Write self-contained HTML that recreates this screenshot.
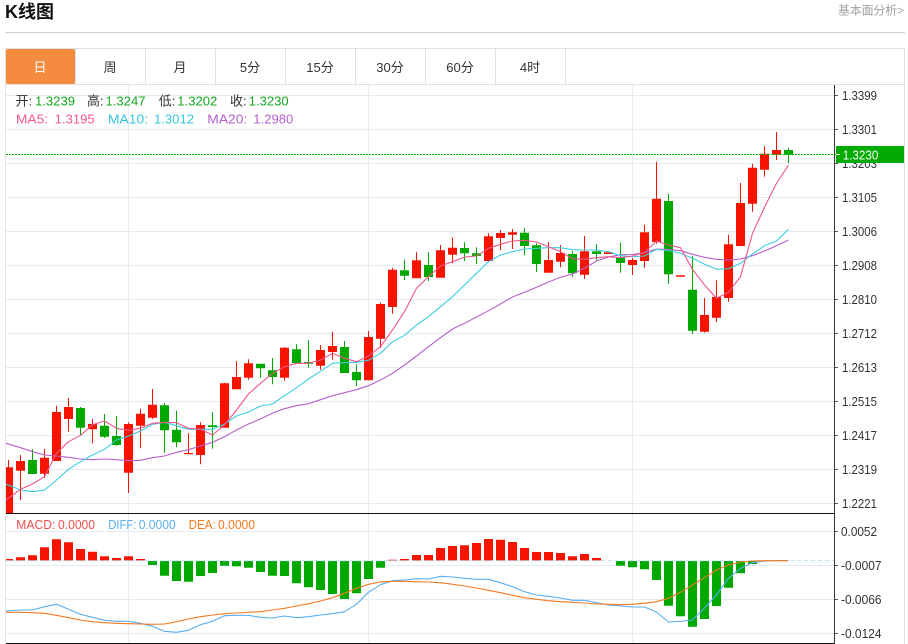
<!DOCTYPE html>
<html lang="zh"><head><meta charset="utf-8"><title>K线图</title>
<style>
html,body{margin:0;padding:0;background:#fff;width:908px;height:644px;overflow:hidden}
svg{display:block}
text{font-family:"Liberation Sans","Noto Sans CJK SC",sans-serif}
.ax{font-size:13px;fill:#333}
.tab{font-size:13px;fill:#333;text-anchor:middle}
</style></head><body>
<svg width="908" height="644" viewBox="0 0 908 644" xmlns="http://www.w3.org/2000/svg">
<rect width="908" height="644" fill="#fff"/>
<text x="5" y="18" font-size="18" font-weight="700" fill="#111">K线图</text>
<text x="838" y="14.5" font-size="12" fill="#a0a0a0" textLength="66">基本面分析&gt;</text>
<rect x="5" y="32" width="900" height="1" fill="#cfcfcf"/>
<!-- frame -->
<path fill="#e0e0e0" d="M5 48h900v1H5zM5 84h900v1H5zM5 48h1v596H5zM904 48h1v596h-1zM75 49h1v35h-1zM145 49h1v35h-1zM215 49h1v35h-1zM285 49h1v35h-1zM355 49h1v35h-1zM425 49h1v35h-1zM495 49h1v35h-1zM565 49h1v35h-1z"/>
<rect x="6" y="49" width="69" height="35" rx="2" fill="#f48b3f"/>
<text class="tab" x="40" y="72" style="fill:#fff">日</text>
<text class="tab" x="110" y="72">周</text>
<text class="tab" x="180" y="72">月</text>
<text class="tab" x="250" y="72">5分</text>
<text class="tab" x="320" y="72">15分</text>
<text class="tab" x="390" y="72">30分</text>
<text class="tab" x="460" y="72">60分</text>
<text class="tab" x="530" y="72">4时</text>
<!-- grid -->
<path fill="#e3ebf3" d="M6 95h828v1H6zM6 129h828v1H6zM6 163h828v1H6zM6 197h828v1H6zM6 231h828v1H6zM6 265h828v1H6zM6 299h828v1H6zM6 333h828v1H6zM6 367h828v1H6zM6 401h828v1H6zM6 435h828v1H6zM6 469h828v1H6zM6 503h828v1H6zM6 531h828v1H6zM6 565h828v1H6zM6 599h828v1H6zM6 633h828v1H6zM128 85h1v559h-1zM368 85h1v559h-1zM632 85h1v559h-1z"/>
<!-- candles red -->
<path fill="#f51400" d="M6 467.3H13V513H6zM8 460h1v8h-1zM16 461h9V470.7h-9zM20 455h1V500h-1zM40 457.7h9V473.7h-9zM44 449h1V478h-1zM52 412h9V461h-9zM56 405.7h1V461h-1zM64 407h9V419h-9zM68 398h1V431.7h-1zM88 424h9V429.3h-9zM92 419h1V443.3h-1zM124 424h9V472.7h-9zM128 422.3h1V493h-1zM136 413.7h9V425.7h-9zM140 408.7h1V448.3h-1zM148 404.7h9V417.7h-9zM152 389h1V419h-1zM184 453h9V454.3h-9zM188 433.3h1V454h-1zM196 425h9V455h-9zM200 422.3h1V464.3h-1zM220 383.3h9V427.7h-9zM224 382.7h1V427.7h-1zM232 377h9V389.3h-9zM236 361.3h1V389.3h-1zM244 363.3h9V377.7h-9zM248 359.3h1V379.7h-1zM280 347.7h9V377.7h-9zM284 347h1V380.7h-1zM316 350h9V365.7h-9zM320 345h1V369.7h-1zM328 346h9V352h-9zM332 332h1V359.7h-1zM364 337h9V380.3h-9zM368 331h1V380.3h-1zM376 304h9V338.7h-9zM380 302.7h1V348h-1zM388 269.7h9V307h-9zM392 267.7h1V313.7h-1zM412 260.3h9V278.3h-9zM416 252.3h1V278.3h-1zM436 250.3h9V277.7h-9zM440 245h1V277.7h-1zM448 247.7h9V254.7h-9zM452 237.3h1V263.3h-1zM484 236.3h9V261h-9zM488 233.3h1V262.3h-1zM496 233h9V238h-9zM500 230h1V250h-1zM508 232.3h9V234.7h-9zM512 229h1V249h-1zM544 260h9V272.7h-9zM548 242.3h1V272.7h-1zM556 253h9V261.7h-9zM560 245h1V267.3h-1zM580 251.3h9V274.7h-9zM584 236h1V279h-1zM604 252.3h9V254h-9zM628 260h9V265h-9zM632 258h1V275h-1zM640 232.3h9V261h-9zM644 224.7h1V267.7h-1zM652 198.7h9V242h-9zM656 161.7h1V243.7h-1zM676 275.3h9V276.7h-9zM700 315h9V331.7h-9zM704 298h1V332.7h-1zM712 297h9V317.7h-9zM716 280.3h1V322h-1zM724 244.3h9V298h-9zM728 234.7h1V301.7h-1zM736 203h9V246h-9zM740 183h1V246h-1zM748 167.7h9V203.7h-9zM752 163.7h1V211.7h-1zM760 153.7h9V169.7h-9zM764 146h1V176.7h-1zM772 150h9V154.7h-9zM776 132h1V160h-1z"/>
<!-- candles green -->
<path fill="#00a800" d="M28 460h9V474h-9zM32 449.3h1V474h-1zM76 408h9V427.7h-9zM80 407h1V435.7h-1zM100 425.7h9V436.7h-9zM104 414h1V438h-1zM112 436h9V445h-9zM116 416h1V445.7h-1zM160 405.3h9V430.3h-9zM164 403h1V452.7h-1zM172 429.7h9V442.3h-9zM176 410.7h1V447.3h-1zM208 425.3h9V427h-9zM212 412h1V448.7h-1zM256 363.7h9V368.3h-9zM260 363.7h1V377.7h-1zM268 370.3h9V377h-9zM272 358h1V384.3h-1zM292 349.3h9V363h-9zM296 344.3h1V363.7h-1zM304 362h9V363.7h-9zM308 340h1V367.7h-1zM340 347h9V373h-9zM344 341h1V373h-1zM352 372h9V380.3h-9zM356 364h1V386h-1zM400 270.3h9V275.7h-9zM404 259.7h1V280h-1zM424 265h9V277h-9zM428 252h1V281.3h-1zM460 248h9V253.3h-9zM464 242.3h1V261h-1zM472 253.3h9V256h-9zM476 247.3h1V264h-1zM520 232.7h9V246h-9zM524 228h1V255.3h-1zM532 245.3h9V264h-9zM536 243.3h1V272h-1zM568 254h9V273.3h-9zM572 251h1V276.7h-1zM592 251.3h9V254h-9zM596 244h1V260.3h-1zM616 257.7h9V263h-9zM620 242.7h1V272.7h-1zM664 201h9V274.3h-9zM668 194h1V284h-1zM688 289.7h9V330.7h-9zM692 256h1V334.3h-1zM784 150h9V154.7h-9zM788 147.7h1V163h-1z"/>
<!-- MA lines -->
<g fill="none" stroke-width="1.1" stroke-linejoin="round">
<polyline stroke="#b65fcc" points="6,443.3 20.5,447.7 32.5,451.7 44.5,455 56.5,456 68.5,457.3 80.5,459 92.5,459.7 104.5,459 116.5,459.7 128.5,460.7 140.5,460.3 152.5,457.7 164.5,456 176.5,452.3 188.5,449.7 200.5,446 212.5,442.3 224.5,436.7 236.5,430 248.5,424 260.5,419 272.5,413 284.5,408.7 296.5,405.7 308.5,403.7 320.5,399.7 332.5,395.7 344.5,392.7 356.5,389.7 368.5,385.7 380.5,380 392.5,373.3 404.5,365 416.5,356 428.5,346.7 440.5,337.7 452.5,329 464.5,323.3 476.5,317 488.5,310.7 500.5,304 512.5,297 524.5,292.3 536.5,287.3 548.5,282 560.5,277.3 572.5,274 584.5,268.3 596.5,261 608.5,257 620.5,254.7 632.5,254.5 644.5,252.7 656.5,249.2 668.5,249.3 680.5,250.7 692.5,254.3 704.5,257.3 716.5,259.3 728.5,260 740.5,259 752.5,255.7 764.5,251 776.5,245.7 788.5,240"/>
<polyline stroke="#3ecde0" points="6,484 20.5,490 32.5,491.7 44.5,490 56.5,480 68.5,469.3 80.5,461.7 92.5,455 104.5,449.3 116.5,440 128.5,436 140.5,431 152.5,424.3 164.5,422.3 176.5,425.7 188.5,429.3 200.5,429.3 212.5,429.3 224.5,424 236.5,416 248.5,412 260.5,406 272.5,404 284.5,395.7 296.5,387.7 308.5,379 320.5,371.3 332.5,363.3 344.5,362.7 356.5,362.3 368.5,360.3 380.5,353.3 392.5,341.7 404.5,335.3 416.5,325 428.5,316.7 440.5,306.7 452.5,296.7 464.5,285 476.5,273.3 488.5,261.7 500.5,255 512.5,251.7 524.5,249 536.5,248.3 548.5,247.7 560.5,247.7 572.5,249.7 584.5,250 596.5,250 608.5,251.7 620.5,255.7 632.5,256.7 644.5,256 656.5,249.3 668.5,250.5 680.5,253.3 692.5,258.3 704.5,264.3 716.5,269.3 728.5,268.7 740.5,263.3 752.5,254 764.5,245.7 776.5,241 788.5,229.3"/>
<polyline stroke="#f0558c" points="6,500 20.5,489.3 32.5,484 44.5,476.7 56.5,453.3 68.5,441.7 80.5,435.3 92.5,424.7 104.5,421 116.5,428.3 128.5,430.3 140.5,428.3 152.5,423.3 164.5,422.3 176.5,422.7 188.5,428.3 200.5,429.3 212.5,435 224.5,425 236.5,410 248.5,394 260.5,383.3 272.5,373.3 284.5,366.7 296.5,363.3 308.5,363.3 320.5,360 332.5,353.3 344.5,358.3 356.5,361.7 368.5,356 380.5,346.7 392.5,330 404.5,311.7 416.5,288.3 428.5,276.7 440.5,266 452.5,261.7 464.5,257 476.5,256 488.5,248.3 500.5,244.3 512.5,241 524.5,240.3 536.5,242 548.5,246.7 560.5,251.7 572.5,258.7 584.5,259.3 596.5,257.7 608.5,256.7 620.5,257.7 632.5,256 644.5,252.5 656.5,241 668.5,245 680.5,247.7 692.5,269.3 704.5,285 716.5,298.3 728.5,292.3 740.5,276.7 752.5,233.3 764.5,207.3 776.5,183.3 788.5,165"/>
</g>
<!-- price line -->
<line x1="6" y1="154.5" x2="836" y2="154.5" stroke="#00b400" stroke-width="1" stroke-dasharray="2 1"/>
<!-- MACD bars -->
<path fill="#f51400" d="M6 559h7V560.5H6zM16 557.3h9V560.5h-9zM28 555.3h9V560.5h-9zM40 547.3h9V560.5h-9zM52 539.3h9V560.5h-9zM64 542.3h9V560.5h-9zM76 549h9V560.5h-9zM88 551.7h9V560.5h-9zM100 556.3h9V560.5h-9zM112 558h9V560.5h-9zM124 556.3h9V560.5h-9zM136 559h9V560.5h-9zM388 559.7h9V560.5h-9zM400 559h9V560.5h-9zM412 555h9V560.5h-9zM424 555h9V560.5h-9zM436 548h9V560.5h-9zM448 546h9V560.5h-9zM460 545.3h9V560.5h-9zM472 543h9V560.5h-9zM484 539h9V560.5h-9zM496 539.7h9V560.5h-9zM508 542h9V560.5h-9zM520 548h9V560.5h-9zM532 552h9V560.5h-9zM544 552h9V560.5h-9zM556 553h9V560.5h-9zM568 556.3h9V560.5h-9zM580 554h9V560.5h-9zM592 558h9V560.5h-9z"/>
<path fill="#00a800" d="M148 561h9V565h-9zM160 561h9V575.7h-9zM172 561h9V581h-9zM184 561h9V581.7h-9zM196 561h9V576h-9zM208 561h9V573h-9zM220 561h9V565.7h-9zM232 561h9V566.3h-9zM244 561h9V567.7h-9zM256 561h9V572h-9zM268 561h9V575.7h-9zM280 561h9V576h-9zM292 561h9V583.3h-9zM304 561h9V587.3h-9zM316 561h9V590h-9zM328 561h9V594h-9zM340 561h9V599h-9zM352 561h9V593.3h-9zM364 561h9V579h-9zM376 561h9V567.7h-9zM616 561h9V565.7h-9zM628 561h9V567.3h-9zM640 561h9V569.3h-9zM652 561h9V580h-9zM664 561h9V605.7h-9zM676 561h9V616.3h-9zM688 561h9V626.7h-9zM700 561h9V619h-9zM712 561h9V606h-9zM724 561h9V587.7h-9zM736 561h9V573.3h-9zM748 561h9V564h-9z"/>
<line x1="6" y1="560.7" x2="834" y2="560.7" stroke="#b9e4f0" stroke-width="1" stroke-dasharray="4 3"/>
<g fill="none" stroke-width="1.1" stroke-linejoin="round">
<polyline stroke="#5aaef0" points="6,611 20.5,610 32.5,610 44.5,606.7 56.5,604.3 68.5,609.3 80.5,614.3 92.5,617.3 104.5,620.3 116.5,621.3 128.5,621.3 140.5,623.3 152.5,626.3 164.5,631.3 176.5,632.3 188.5,630.3 200.5,624.7 212.5,621.3 224.5,615.7 236.5,615.3 248.5,615.3 260.5,617.3 272.5,618 284.5,616 296.5,617.7 308.5,616.7 320.5,615 332.5,613.7 344.5,611.7 356.5,604.3 368.5,592.3 380.5,584.7 392.5,580.7 404.5,580 416.5,578.7 428.5,579 440.5,576.3 452.5,577 464.5,578.3 476.5,579.3 488.5,579.3 500.5,582.7 512.5,586.7 524.5,591.7 536.5,595 548.5,596.3 560.5,598 572.5,600.3 584.5,600.3 596.5,602.7 608.5,605 620.5,606 632.5,607 644.5,607 656.5,612 668.5,622 680.5,621.3 692.5,620 704.5,608 716.5,595 728.5,578.3 740.5,568.3 752.5,562.7 764.5,561 776.5,560.7 788.5,560.7"/>
<polyline stroke="#f47a20" points="6,612.3 20.5,612.3 32.5,612.7 44.5,613.3 56.5,615.3 68.5,617.7 80.5,620 92.5,621.7 104.5,622.7 116.5,623.3 128.5,623.7 140.5,624 152.5,624.3 164.5,624 176.5,621.7 188.5,619 200.5,616.7 212.5,615 224.5,613.7 236.5,613 248.5,612.3 260.5,611.7 272.5,610 284.5,608.3 296.5,606 308.5,603.7 320.5,601 332.5,597.7 344.5,593.3 356.5,588.3 368.5,584.3 380.5,582 392.5,581.3 404.5,581.3 416.5,581.7 428.5,582 440.5,582.7 452.5,584.3 464.5,586 476.5,588 488.5,590.3 500.5,592.7 512.5,595.3 524.5,597.7 536.5,599.3 548.5,600.7 560.5,601.7 572.5,602.3 584.5,603 596.5,604 608.5,604.3 620.5,604.7 632.5,604.3 644.5,603.3 656.5,601.7 668.5,598.3 680.5,592.3 692.5,585 704.5,577.7 716.5,570 728.5,565 740.5,562 752.5,561 764.5,560.7 776.5,560.7 788.5,560.7"/>
</g>
<!-- frame lines -->
<rect x="6" y="513" width="829" height="1" fill="#111"/>
<rect x="6" y="643" width="829" height="1" fill="#111"/>
<rect x="834" y="85" width="1" height="559" fill="#333"/>
<!-- ticks -->
<path fill="#555" d="M835 95h3v1h-3zM835 129h3v1h-3zM835 163h3v1h-3zM835 197h3v1h-3zM835 231h3v1h-3zM835 265h3v1h-3zM835 299h3v1h-3zM835 333h3v1h-3zM835 367h3v1h-3zM835 401h3v1h-3zM835 435h3v1h-3zM835 469h3v1h-3zM835 503h3v1h-3zM835 531h3v1h-3zM835 565h3v1h-3zM835 599h3v1h-3zM835 633h3v1h-3z"/>
<!-- axis labels -->
<g>
<text class="ax" x="842" y="99.8" textLength="35" lengthAdjust="spacingAndGlyphs">1.3399</text>
<text class="ax" x="842" y="133.8" textLength="35" lengthAdjust="spacingAndGlyphs">1.3301</text>
<text class="ax" x="842" y="167.8" textLength="35" lengthAdjust="spacingAndGlyphs">1.3203</text>
<text class="ax" x="842" y="201.8" textLength="35" lengthAdjust="spacingAndGlyphs">1.3105</text>
<text class="ax" x="842" y="235.8" textLength="35" lengthAdjust="spacingAndGlyphs">1.3006</text>
<text class="ax" x="842" y="269.8" textLength="35" lengthAdjust="spacingAndGlyphs">1.2908</text>
<text class="ax" x="842" y="303.8" textLength="35" lengthAdjust="spacingAndGlyphs">1.2810</text>
<text class="ax" x="842" y="337.8" textLength="35" lengthAdjust="spacingAndGlyphs">1.2712</text>
<text class="ax" x="842" y="371.8" textLength="35" lengthAdjust="spacingAndGlyphs">1.2613</text>
<text class="ax" x="842" y="405.8" textLength="35" lengthAdjust="spacingAndGlyphs">1.2515</text>
<text class="ax" x="842" y="439.8" textLength="35" lengthAdjust="spacingAndGlyphs">1.2417</text>
<text class="ax" x="842" y="473.8" textLength="35" lengthAdjust="spacingAndGlyphs">1.2319</text>
<text class="ax" x="842" y="507.8" textLength="35" lengthAdjust="spacingAndGlyphs">1.2221</text>
<text class="ax" x="841" y="535.8" textLength="36" lengthAdjust="spacingAndGlyphs">0.0052</text>
<text class="ax" x="841" y="569.8" textLength="40.5" lengthAdjust="spacingAndGlyphs">-0.0007</text>
<text class="ax" x="841" y="603.8" textLength="40.5" lengthAdjust="spacingAndGlyphs">-0.0066</text>
<text class="ax" x="841" y="637.8" textLength="40.5" lengthAdjust="spacingAndGlyphs">-0.0124</text>
</g>
<!-- last price -->
<rect x="836" y="146" width="68" height="17" fill="#00aa00"/>
<rect x="836" y="154" width="4" height="1" fill="#fff"/>
<text x="842.7" y="159.3" font-size="13" fill="#fff" textLength="35.6" lengthAdjust="spacingAndGlyphs">1.3230</text>
<!-- legend -->
<g font-size="13">
<text x="15.5" y="105.5" fill="#333">开:</text>
<text x="35" y="105.5" fill="#14a81e" textLength="40" lengthAdjust="spacingAndGlyphs">1.3239</text>
<text x="87" y="105.5" fill="#333">高:</text>
<text x="105.5" y="105.5" fill="#14a81e" textLength="40" lengthAdjust="spacingAndGlyphs">1.3247</text>
<text x="158.7" y="105.5" fill="#333">低:</text>
<text x="177.3" y="105.5" fill="#14a81e" textLength="40" lengthAdjust="spacingAndGlyphs">1.3202</text>
<text x="230" y="105.5" fill="#333">收:</text>
<text x="248.7" y="105.5" fill="#14a81e" textLength="40" lengthAdjust="spacingAndGlyphs">1.3230</text>
<text x="16" y="123.5" fill="#f4588c" textLength="32" lengthAdjust="spacingAndGlyphs">MA5:</text>
<text x="54.7" y="123.5" fill="#f4588c" textLength="40" lengthAdjust="spacingAndGlyphs">1.3195</text>
<text x="108" y="123.5" fill="#36c5dd" textLength="40" lengthAdjust="spacingAndGlyphs">MA10:</text>
<text x="154" y="123.5" fill="#36c5dd" textLength="40" lengthAdjust="spacingAndGlyphs">1.3012</text>
<text x="207.3" y="123.5" fill="#b55ecf" textLength="40" lengthAdjust="spacingAndGlyphs">MA20:</text>
<text x="253.3" y="123.5" fill="#b55ecf" textLength="40" lengthAdjust="spacingAndGlyphs">1.2980</text>
</g>
<g font-size="12.5">
<text x="16.3" y="529" fill="#f0504a" textLength="39" lengthAdjust="spacingAndGlyphs">MACD:</text>
<text x="58" y="529" fill="#f0504a" textLength="37" lengthAdjust="spacingAndGlyphs">0.0000</text>
<text x="108.3" y="529" fill="#5aaef0" textLength="28" lengthAdjust="spacingAndGlyphs">DIFF:</text>
<text x="138.7" y="529" fill="#5aaef0" textLength="37" lengthAdjust="spacingAndGlyphs">0.0000</text>
<text x="188.7" y="529" fill="#f47a20" textLength="27" lengthAdjust="spacingAndGlyphs">DEA:</text>
<text x="218" y="529" fill="#f47a20" textLength="37" lengthAdjust="spacingAndGlyphs">0.0000</text>
</g>
</svg>
</body></html>
